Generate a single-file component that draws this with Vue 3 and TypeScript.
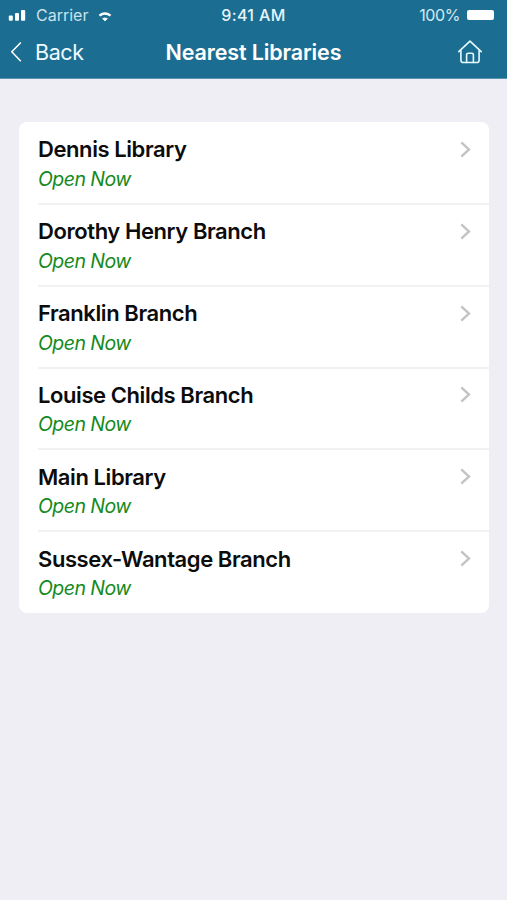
<script setup lang="ts">
interface Library {
  name: string
  status: string
}

const libraries: Library[] = [
  { name: 'Dennis Library', status: 'Open Now' },
  { name: 'Dorothy Henry Branch', status: 'Open Now' },
  { name: 'Franklin Branch', status: 'Open Now' },
  { name: 'Louise Childs Branch', status: 'Open Now' },
  { name: 'Main Library', status: 'Open Now' },
  { name: 'Sussex-Wantage Branch', status: 'Open Now' },
]
</script>

<template>
  <div class="screen">
    <header class="top">
      <div class="status-bar">
        <div class="carrier">
          <svg class="signal" width="18" height="12" viewBox="0 0 18 12" fill="#fff">
            <rect x="0.8" y="6.4" width="4" height="5.4" rx="1" />
            <rect x="7" y="4" width="4" height="7.8" rx="1" />
            <rect x="13" y="1" width="4.2" height="10.8" rx="1" />
          </svg>
          <span class="carrier-name">Carrier</span>
          <svg class="wifi" width="14" height="12" viewBox="0 0 14 12" fill="none" stroke="#fff">
            <path d="M1.4 4.6Q7 0.4 12.6 4.6" stroke-width="2.3" />
            <path d="M4.6 7.6Q7 6.2 9.4 7.6L7 10Z" fill="#fff" stroke-width="0.8" stroke-linejoin="round" />
          </svg>
        </div>
        <span class="clock">9:41 AM</span>
        <div class="power">
          <span class="percent">100%</span>
          <span class="battery"></span>
        </div>
      </div>
      <nav class="nav-bar">
        <button class="back" type="button">
          <svg width="12" height="22" viewBox="0 0 12 22" fill="none" stroke="#fff" stroke-width="1.5">
            <path d="M10.8 1.4L1.8 10.8L10.8 20.2" />
          </svg>
          <span>Back</span>
        </button>
        <h1 class="heading">Nearest Libraries</h1>
        <button class="home" type="button" aria-label="Home">
          <svg width="26" height="24" viewBox="0 0 26 24" fill="none" stroke="#e6fbff" stroke-width="1.6" stroke-linecap="round" stroke-linejoin="round">
            <path d="M1.8 11.6L13 1.2L24.2 11.6" />
            <path d="M3.9 10.8V20.2Q3.9 22.5 6.4 22.5H19.6Q22.1 22.5 22.1 20.2V10.8" />
            <path d="M9.6 22.5V14.8Q9.6 13.2 11.2 13.2H14.8Q16.4 13.2 16.4 14.8V22.5" />
          </svg>
        </button>
      </nav>
    </header>
    <main class="content">
      <ul class="card">
        <li v-for="library in libraries" :key="library.name" class="row">
          <div class="info">
            <div class="name">{{ library.name }}</div>
            <div class="state">{{ library.status }}</div>
          </div>
          <svg class="chevron" width="11" height="17" viewBox="0 0 11 17" fill="none" stroke="#c4c4c7" stroke-width="2.4">
            <path d="M1.3 1.3L9 8.5L1.3 15.7" />
          </svg>
        </li>
      </ul>
    </main>
  </div>
</template>

<style>
body {
  margin: 0;
  background: #efeef4;
}
</style>

<style scoped>
.screen {
  min-height: 900px;
  background: #efeef4;
  font-family: Inter, "Liberation Sans", sans-serif;
}
.top {
  box-sizing: border-box;
  height: 79px;
  background: #1b6e92;
  border-bottom: 1px solid #5b94ae;
  color: #fff;
}
.status-bar {
  display: grid;
  grid-template-columns: 1fr auto 1fr;
  align-items: center;
  height: 30px;
  padding: 0 13px 0 8px;
  font-size: 16px;
  line-height: 20px;
}
.carrier,
.power {
  display: flex;
  align-items: center;
}
.carrier-name {
  margin: 0 10px 0 10px;
  color: #c9e2ec;
}
.wifi {
  margin-top: 3px;
}
.clock {
  padding-left: 5px;
  font-weight: 500;
  letter-spacing: 0.4px;
  color: #e6f5fa;
}
.power {
  justify-content: flex-end;
}
.percent {
  color: #d3e9f1;
  letter-spacing: -0.4px;
}
.battery {
  width: 27px;
  height: 10px;
  margin-left: 7px;
  border-radius: 2px;
  background: #fff;
}
.nav-bar {
  display: grid;
  grid-template-columns: 1fr auto 1fr;
  align-items: center;
  height: 44px;
  padding: 0 24px 0 10px;
}
button {
  padding: 0;
  border: 0;
  background: none;
  color: inherit;
  font: inherit;
}
.back {
  display: flex;
  align-items: center;
  gap: 13px;
  font-size: 21.5px;
  line-height: 26px;
  letter-spacing: -0.4px;
  color: #eefaff;
}
.heading {
  margin: 0;
  padding: 0 0 0 14px;
  font-size: 21.5px;
  font-weight: 560;
  line-height: 26px;
  letter-spacing: -0.13px;
}
.home {
  display: flex;
  justify-self: end;
}
.content {
  padding: 43px 18px 0 19px;
}
.card {
  margin: 0;
  padding: 0 0 1px 19px;
  list-style: none;
  border-radius: 8px;
  background: #fff;
}
.row {
  box-sizing: border-box;
  display: flex;
  justify-content: space-between;
  height: 81.8px;
  padding: 13.5px 18px 0 0;
}
.row:first-child {
  height: 81px;
  padding-top: 13px;
}
.row + .row {
  border-top: 2px solid #f2f2f4;
  padding-top: 12.4px;
}
.name {
  font-size: 22px;
  font-weight: 560;
  line-height: 28px;
  letter-spacing: -0.42px;
  color: #0c0c0c;
}
.state {
  margin-top: 1.5px;
  font-size: 19.5px;
  font-style: italic;
  line-height: 28px;
  letter-spacing: -0.55px;
  color: #148a1c;
}
.chevron {
  margin-top: 5.5px;
}
</style>
